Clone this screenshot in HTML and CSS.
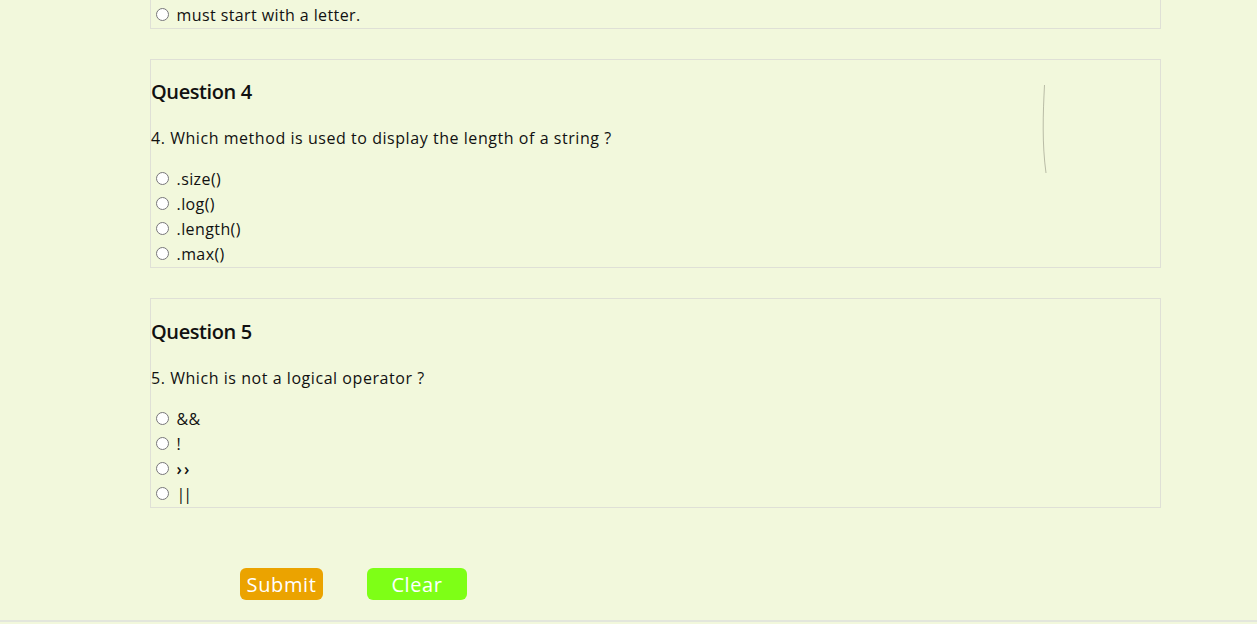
FILE: index.html
```html
<!DOCTYPE html>
<html>
<head>
<meta charset="utf-8">
<link rel="stylesheet" href="styles.css">
</head>
<body>
<main class="quiz">
  <section class="card card-partial">
    <label class="opt"><input type="radio" name="q3"><span> must start with a letter.</span></label>
  </section>

  <section class="card">
    <h3 class="qtitle">Question 4</h3>
    <p class="qtext">4. Which method is used to display the length of a string ?</p>
    <label class="opt"><input type="radio" name="q4"><span> .size()</span></label>
    <label class="opt"><input type="radio" name="q4"><span> .log()</span></label>
    <label class="opt"><input type="radio" name="q4"><span> .length()</span></label>
    <label class="opt"><input type="radio" name="q4"><span> .max()</span></label>
    <svg class="arc" width="12" height="92" viewBox="0 0 12 92"><path d="M3.5 1 C2 30 1 60 5 89" fill="none" stroke="#b9bca6" stroke-width="1"/></svg>
  </section>

  <section class="card card-tall">
    <h3 class="qtitle">Question 5</h3>
    <p class="qtext">5. Which is not a logical operator ?</p>
    <label class="opt"><input type="radio" name="q5"><span> &amp;&amp;</span></label>
    <label class="opt"><input type="radio" name="q5"><span> !</span></label>
    <label class="opt"><input type="radio" name="q5"><span> <span class="tight">&rsaquo; &rsaquo;</span></span></label>
    <label class="opt"><input type="radio" name="q5"><span> <span class="pipes">||</span></span></label>
  </section>

  <div class="actions">
    <button class="btn btn-submit">Submit</button>
    <button class="btn btn-clear">Clear</button>
  </div>
</main>
<footer class="foot"></footer>
</body>
</html>
```

FILE: styles.css
```css
html, body {
  margin: 0;
  padding: 0;
  background: #f2f8dc;
}
body {
  font-family: "Open Sans", "DejaVu Sans", sans-serif;
  color: #111;
  overflow: hidden;
  height: 624px;
}
.quiz {
  width: 1011px;
  margin-left: 150px;
}
.card {
  position: relative;
  border: 1px solid #dfe0d6;
  margin-bottom: 30px;
  padding-bottom: 1px;
  display: flex;
  flex-direction: column;
}
.card-tall {
  padding-top: 1px;
}
.card-partial {
  margin-top: -10px;
  padding-top: 12px;
  border-top: none;
}
.qtitle {
  margin: 17px 0 0;
  height: 30px;
  line-height: 30px;
  font-size: 20px;
  font-weight: 600;
  letter-spacing: -0.4px;
}
.qtext {
  margin: 20px 0 17px;
  font-size: 16px;
  line-height: 22px;
  letter-spacing: 0.55px;
}
.opt {
  display: flex;
  align-items: center;
  height: 25px;
  font-size: 16px;
  letter-spacing: 0.4px;
  white-space: pre;
}
.opt input {
  width: 13px;
  height: 13px;
  margin: 0 3px 0 5px;
}
.tight {
  font-weight: 600;
  letter-spacing: -1px;
}
.pipes {
  letter-spacing: -2px;
}
.arc {
  position: absolute;
  left: 890px;
  top: 24px;
}
.actions {
  display: flex;
  gap: 44px;
  padding: 30px 0 0 90px;
}
.btn {
  height: 32px;
  border: none;
  border-radius: 6px;
  color: #fff;
  font-family: inherit;
  font-size: 20px;
  letter-spacing: 0.6px;
  padding: 0;
}
.btn-submit {
  background: #eba300;
  width: 83px;
}
.btn-clear {
  background: #7eff16;
  width: 100px;
}
.foot {
  position: absolute;
  left: 0;
  right: 0;
  top: 620px;
  border-top: 2px solid #e3e6dd;
}
```
